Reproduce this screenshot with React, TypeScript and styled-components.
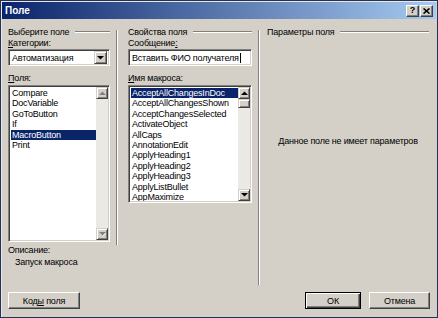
import React from 'react';
import styled, { createGlobalStyle } from 'styled-components';

const GlobalStyle = createGlobalStyle`
  html, body {
    margin: 0;
    padding: 0;
    background: #d4d0c8;
  }
  body {
    font-family: 'Liberation Sans', Arial, sans-serif;
    font-size: 9px;
    letter-spacing: -0.2px;
    color: #000;
  }
`;

const fields = ['Compare', 'DocVariable', 'GoToButton', 'If', 'MacroButton', 'Print'];
const macros = [
  'AcceptAllChangesInDoc',
  'AcceptAllChangesShown',
  'AcceptChangesSelected',
  'ActivateObject',
  'AllCaps',
  'AnnotationEdit',
  'ApplyHeading1',
  'ApplyHeading2',
  'ApplyHeading3',
  'ApplyListBullet',
  'AppMaximize'
];

const Arrow: React.FC<{ dir: 'up' | 'down'; disabled?: boolean }> = ({ dir, disabled }) => (
  <svg width="7" height="4" viewBox="0 0 7 4">
    {disabled && (
      <path d={dir === 'up' ? 'M1 4 L4 1 L7 4 Z' : 'M1 1 L7 1 L4 4 Z'} fill="#fff" />
    )}
    <path
      d={dir === 'up' ? 'M0 4 L3.5 0.5 L7 4 Z' : 'M0 0 L7 0 L3.5 3.5 Z'}
      fill={disabled ? '#808080' : '#000'}
    />
  </svg>
);

const App: React.FC = () => {
  return (
    <>
      <GlobalStyle />
      <Window>
        <TitleBar>
          <Title>Поле</Title>
          <CaptionButtons>
            <CaptionButton>?</CaptionButton>
            <CaptionButton>
              <svg width="7" height="6" viewBox="0 0 7 6">
                <path d="M0.5 0.5 L6.5 5.5 M6.5 0.5 L0.5 5.5" stroke="#000" strokeWidth="1.6" />
              </svg>
            </CaptionButton>
          </CaptionButtons>
        </TitleBar>
        <Body>
          <Columns>
            <Column width={102}>
              <GroupHeader>
                <span>Выберите поле</span>
                <Etch />
              </GroupHeader>
              <Label>
                <u>К</u>атегории:
              </Label>
              <Field>
                <FieldText>Автоматизация</FieldText>
                <DropButton>
                  <Arrow dir="down" />
                </DropButton>
              </Field>
              <Label top={7}>
                <u>П</u>оля:
              </Label>
              <ListBox height={157}>
                <Items>
                  {fields.map((f) => (
                    <Item key={f} selected={f === 'MacroButton'}>
                      {f}
                    </Item>
                  ))}
                </Items>
                <ScrollBar>
                  <ScrollButton>
                    <Arrow dir="up" disabled />
                  </ScrollButton>
                  <Track />
                  <ScrollButton>
                    <Arrow dir="down" disabled />
                  </ScrollButton>
                </ScrollBar>
              </ListBox>
              <Label top={3}>Описание:</Label>
              <Description>Запуск макроса</Description>
            </Column>
            <Separator height={215} />
            <Column width={124}>
              <GroupHeader>
                <span>Свойства поля</span>
                <Etch />
              </GroupHeader>
              <Label>
                Сообщение<u>:</u>
              </Label>
              <Field>
                <FieldText>
                  <span>Вставить ФИО получателя</span>
                  <Caret />
                </FieldText>
              </Field>
              <Label top={7}>
                <u>И</u>мя макроса:
              </Label>
              <ListBox height={118}>
                <Items>
                  {macros.map((m, i) => (
                    <Item key={m} selected={i === 0}>
                      {m}
                    </Item>
                  ))}
                </Items>
                <ScrollBar>
                  <ScrollButton>
                    <Arrow dir="up" />
                  </ScrollButton>
                  <Thumb />
                  <Track />
                  <ScrollButton>
                    <Arrow dir="down" />
                  </ScrollButton>
                </ScrollBar>
              </ListBox>
            </Column>
            <Separator height={255} />
            <Column width={162}>
              <GroupHeader>
                <span>Параметры поля</span>
                <Etch />
              </GroupHeader>
              <EmptyNote>Данное поле не имеет параметров</EmptyNote>
            </Column>
          </Columns>
          <ButtonRow>
            <Button width={72}>
              <span>
                Код<u>ы</u> поля
              </span>
            </Button>
            <Spacer />
            <Button width={56} isDefault>
              ОК
            </Button>
            <Button width={61}>Отмена</Button>
          </ButtonRow>
        </Body>
      </Window>
    </>
  );
};

const Window = styled.div`
  width: 438px;
  height: 318px;
  box-sizing: border-box;
  background: #d4d0c8;
  border: 1px solid #22325c;
  padding: 1px;
  box-shadow: inset 1px 1px 0 #ece9e2;
  display: flex;
  flex-direction: column;
`;

const TitleBar = styled.div`
  height: 17px;
  flex-shrink: 0;
  display: flex;
  align-items: center;
  padding: 0 3px;
  background: linear-gradient(to right, #0a246a, #a6caf0);
`;

const Title = styled.div`
  flex: 1;
  color: #fff;
  font-weight: bold;
  font-size: 10px;
  letter-spacing: 0;
`;

const CaptionButtons = styled.div`
  display: flex;
  gap: 1px;
`;

const CaptionButton = styled.div`
  width: 13px;
  height: 12px;
  box-sizing: border-box;
  background: #d4d0c8;
  border: 1px solid;
  border-color: #fff #404040 #404040 #fff;
  box-shadow: inset -1px -1px 0 #808080;
  display: flex;
  align-items: center;
  justify-content: center;
  font-weight: bold;
  font-size: 9px;
  line-height: 1;
`;

const Body = styled.div`
  flex: 1;
  display: flex;
  flex-direction: column;
  padding: 7px 6px 0 6px;
`;

const Columns = styled.div`
  display: flex;
  height: 259px;
`;

const Column = styled.div<{ width: number }>`
  width: ${(p) => p.width}px;
  display: flex;
  flex-direction: column;
`;

const Separator = styled.div<{ height: number }>`
  width: 0;
  height: ${(p) => p.height}px;
  margin: 4px 7px 0 6px;
  border-left: 1px solid #808080;
  border-right: 1px solid #fff;
  &:nth-of-type(2) {
    margin-right: 10px;
  }
`;

const GroupHeader = styled.div`
  height: 12px;
  display: flex;
  align-items: center;
  white-space: nowrap;
`;

const Etch = styled.div`
  flex: 1;
  margin-left: 6px;
  border-top: 1px solid #808080;
  border-bottom: 1px solid #fff;
`;

const Label = styled.div<{ top?: number }>`
  height: 11px;
  line-height: 11px;
  margin-top: ${(p) => p.top ?? 0}px;
  white-space: nowrap;
`;

const Field = styled.div`
  height: 17px;
  box-sizing: border-box;
  background: #fff;
  border: 1px solid;
  border-color: #808080 #fff #fff #808080;
  box-shadow: inset 1px 1px 0 #404040, inset -1px -1px 0 #d4d0c8;
  display: flex;
  align-items: center;
  padding: 2px;
`;

const FieldText = styled.div`
  flex: 1;
  padding-left: 1px;
  white-space: nowrap;
  display: flex;
  align-items: center;
`;

const Caret = styled.span`
  display: inline-block;
  width: 1px;
  height: 10px;
  margin-left: 1px;
  background: #000;
`;

const DropButton = styled.div`
  width: 13px;
  height: 13px;
  box-sizing: border-box;
  background: #d4d0c8;
  border: 1px solid;
  border-color: #d4d0c8 #404040 #404040 #d4d0c8;
  box-shadow: inset 1px 1px 0 #fff, inset -1px -1px 0 #808080;
  display: flex;
  align-items: center;
  justify-content: center;
`;

const ListBox = styled.div<{ height: number }>`
  height: ${(p) => p.height}px;
  margin-top: 1px;
  box-sizing: border-box;
  background: #fff;
  border: 1px solid;
  border-color: #808080 #fff #fff #808080;
  box-shadow: inset 1px 1px 0 #404040, inset -1px -1px 0 #d4d0c8;
  padding: 2px 1px 1px 2px;
  display: flex;
`;

const Items = styled.div`
  flex: 1;
  overflow: hidden;
`;

const Item = styled.div<{ selected?: boolean }>`
  height: 10.4px;
  line-height: 10.4px;
  padding-left: 1px;
  white-space: nowrap;
  background: ${(p) => (p.selected ? '#0a246a' : 'transparent')};
  color: ${(p) => (p.selected ? '#fff' : '#000')};
`;

const ScrollBar = styled.div`
  width: 12px;
  display: flex;
  flex-direction: column;
  margin: -1px 0 0 0;
`;

const ScrollButton = styled.div`
  height: 12px;
  box-sizing: border-box;
  background: #d4d0c8;
  border: 1px solid;
  border-color: #d4d0c8 #404040 #404040 #d4d0c8;
  box-shadow: inset 1px 1px 0 #fff, inset -1px -1px 0 #808080;
  display: flex;
  align-items: center;
  justify-content: center;
`;

const Thumb = styled(ScrollButton)`
  height: 9px;
`;

const Track = styled.div`
  flex: 1;
  background: #ebe9e4;
`;

const Description = styled.div`
  margin-top: 1px;
  padding-left: 7px;
  line-height: 11px;
  white-space: nowrap;
`;

const EmptyNote = styled.div`
  margin-top: 98px;
  text-align: center;
  white-space: nowrap;
  line-height: 11px;
`;

const ButtonRow = styled.div`
  margin-top: 7px;
  display: flex;
  gap: 8px;
`;

const Spacer = styled.div`
  flex: 1;
`;

const Button = styled.div<{ width: number; isDefault?: boolean }>`
  width: ${(p) => p.width}px;
  height: 17px;
  box-sizing: border-box;
  background: #d4d0c8;
  border: 1px solid;
  border-color: ${(p) => (p.isDefault ? '#000' : '#fff #404040 #404040 #fff')};
  box-shadow: ${(p) =>
    p.isDefault
      ? 'inset 1px 1px 0 #fff, inset -1px -1px 0 #404040, inset -2px -2px 0 #808080'
      : 'inset -1px -1px 0 #808080'};
  display: flex;
  align-items: center;
  justify-content: center;
  white-space: nowrap;
`;

export default App;
